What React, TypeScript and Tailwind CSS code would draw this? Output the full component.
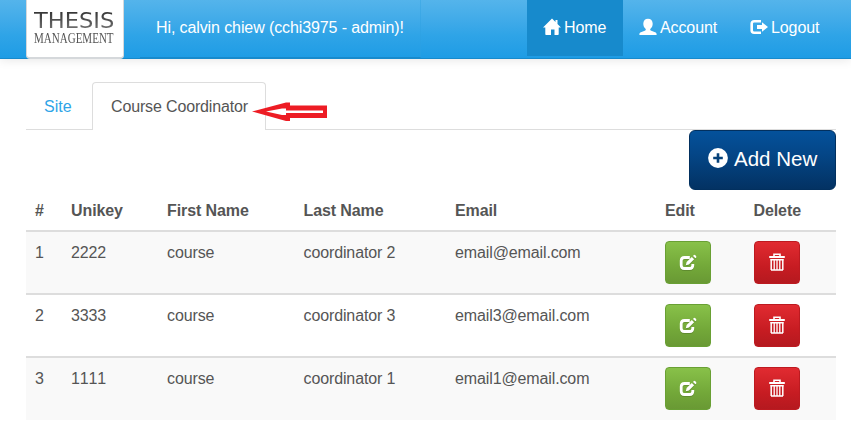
import React from "react";

const people = [
  { id: 1, unikey: "2222", first: "course", last: "coordinator 2", email: "email@email.com" },
  { id: 2, unikey: "3333", first: "course", last: "coordinator 3", email: "email3@email.com" },
  { id: 3, unikey: "1111", first: "course", last: "coordinator 1", email: "email1@email.com" },
];

const columns = "grid grid-cols-[36px_96px_136.5px_151.5px_210px_88.5px_91.5px]";

function HomeIcon() {
  return (
    <svg className="-mt-0.5 h-[18px] w-[18px] shrink-0" viewBox="0 0 18 18" fill="currentColor">
      <path d="M9 .5 18 9.600h-2.300v6.600c0 .5-.3.800-.8.800h-3.400v-5.400h-3.500V17H3.100c-.5 0-.8-.3-.8-.8V9.600H0zM12.500 2h2v4l-2-2z" />
    </svg>
  );
}

function UserIcon() {
  return (
    <svg className="-mt-0.5 h-[18px] w-[18px] shrink-0" viewBox="0 0 18 18" fill="currentColor">
      <path d="M9 .8c2.900 0 4.700 2 4.700 4.900 0 2.100-.9 3.900-2.200 5.100-.5.5-.4 1.300.2 1.600l4.400 1.900c.9.400 1.500.9 1.500 1.900v.8H.4v-.8c0-1 .6-1.500 1.500-1.900l4.400-1.900c.6-.3.7-1.100.2-1.600C5.200 9.600 4.300 7.800 4.300 5.700 4.300 2.800 6.100.8 9 .8z" />
    </svg>
  );
}

function LogoutIcon() {
  return (
    <svg className="-mt-0.5 h-[18px] w-[18px] shrink-0" viewBox="0 0 18 18" fill="none">
      <path d="M11 3.200H4.200c-1.500 0-2.500 1-2.500 2.500v6.600c0 1.500 1 2.500 2.500 2.500H11" stroke="currentColor" strokeWidth="2.600" />
      <path d="M12 4.300 18 9l-6 4.700V11H7V7h5z" fill="currentColor" />
    </svg>
  );
}

function PlusIcon() {
  return (
    <svg className="-mt-px h-5 w-5 shrink-0" viewBox="0 0 20 20">
      <circle cx="10" cy="10" r="9.900" fill="currentColor" />
      <path d="M10 5.200v9.600M5.200 10h9.600" stroke="#064179" strokeWidth="2.600" />
    </svg>
  );
}

function EditIcon() {
  return (
    <svg className="h-[18px] w-[18px] drop-shadow-[0_1px_0_rgba(0,0,0,0.15)]" viewBox="0 0 18 18" fill="none">
      <path d="M10.800 3.500H5.500Q2.200 3.500 2.200 6.800v4.400Q2.200 14.500 5.500 14.500h5Q13.800 14.500 13.800 11.200V10" stroke="currentColor" strokeWidth="2.800" />
      <path d="m6.800 11.300.8-3.200L12.800 2.900l2.300 2.300L9.900 10.400z" fill="currentColor" />
      <path d="m14 1.900.6-.6q.9-.9 1.800 0l.6.6q.9.900 0 1.800l-.6.600z" fill="currentColor" />
    </svg>
  );
}

function TrashIcon() {
  return (
    <svg className="mb-0.5 h-[18px] w-4" viewBox="0 0 16 18" fill="none" stroke="currentColor">
      <path d="M5 3V1.200h6V3" strokeWidth="1.600" />
      <path d="M.2 4h15.600" strokeWidth="2" />
      <path d="M1.500 6.700h13M2 17h12" strokeWidth="1.600" />
      <path d="M2.200 6v11M13.800 6v11" strokeWidth="1.500" />
      <path d="M5.200 6v11M8 6v11M10.800 6v11" strokeWidth="1.300" />
    </svg>
  );
}

function Logo() {
  return (
    <div className="h-[59px] w-[98px] rounded-b-[4px] border-x border-b-2 border-[#d5d8db] bg-white pt-[10px] pl-[7px] whitespace-nowrap">
      <div className="h-[21px] w-[82px]">
        <div className="w-max origin-top-left scale-x-[1.025] bg-linear-to-b from-[#303030] to-[#777777] bg-clip-text font-['DejaVu_Sans',sans-serif] text-[22px] leading-[21px] text-transparent">THESIS</div>
      </div>
      <div className="h-[15px] w-[82px]">
        <div className="w-max origin-top-left scale-x-[0.76] font-['Liberation_Serif',serif] text-[14.500px] leading-[14px] text-[#555555]">MANAGEMENT</div>
      </div>
    </div>
  );
}

function Navbar() {
  return (
    <header className="flex h-[59px] items-start border-b border-[#178acc] bg-linear-to-b from-[#54b4eb] via-[#2fa4e7] via-60% to-[#1d9ce5] pl-[26px] text-white shadow-[0_1px_10px_rgba(0,0,0,0.1)]">
      <Logo />
      <div className="ml-4 flex h-[58px] w-[281px] items-center border-r border-b border-r-[#2ca0e2]/40 border-b-[#178acc] pb-px pl-4 tracking-[-0.105px] whitespace-nowrap">
        Hi, calvin chiew (cchi3975 - admin)!
      </div>
      <nav className="ml-[106px] flex h-14 whitespace-nowrap">
        <a className="flex w-24 items-center gap-[3px] bg-[#178acc] pl-4">
          <HomeIcon />
          <span className="tracking-[-0.1px]">Home</span>
        </a>
        <a className="flex w-[111px] items-center gap-[3px] pl-4">
          <UserIcon />
          <span className="tracking-[-0.1px]">Account</span>
        </a>
        <a className="flex w-[102px] items-center gap-[3px] pl-4">
          <LogoutIcon />
          <span className="tracking-[-0.1px]">Logout</span>
        </a>
      </nav>
    </header>
  );
}

function Tabs() {
  return (
    <div className="relative mt-[23px] flex h-12 items-end border-b border-[#dddddd]">
      <a className="flex h-[47px] w-[66px] items-center pt-0.5 pl-[18px] text-[#2fa4e7]">Site</a>
      <a className="-mb-px flex h-12 w-[174px] items-center rounded-t-[4px] border border-b-0 border-[#dddddd] bg-white pl-[18px] tracking-[-0.15px] whitespace-nowrap">Course Coordinator</a>
      <svg className="absolute top-[19px] left-[225px] h-5 w-[78px]" viewBox="0 0 78 20">
        <path d="M1 10.500 35 1.500h4V4.500h37v12.500H39v3h-4z" fill="#ed1c24" />
        <path d="M15 10.500 31 7.500h4V9.500h37v2.500H35v2h-4z" fill="#fff" />
      </svg>
    </div>
  );
}

const actionButton = "flex h-[43px] w-[46px] items-center justify-center rounded-[4px] border text-white";

export default function App() {
  return (
    <div className="h-[422px] w-[851px] overflow-hidden bg-white font-['Liberation_Sans',Arial,sans-serif] text-[16px] leading-6 text-[#555555]">
      <Navbar />
      <main className="ml-[26px] w-[810px]">
        <Tabs />
        <div className="flex h-[60px] justify-end">
          <button className="flex h-[60px] w-[147px] items-center gap-[6px] rounded-[6px] border border-[#02305f] bg-linear-to-b from-[#04519b] via-[#044687] via-40% to-[#033263] pb-[3px] pl-[18px] text-[20.500px] whitespace-nowrap text-white">
            <PlusIcon />Add New
          </button>
        </div>
        <div className={`${columns} h-[42px] border-b-2 border-[#dddddd] pt-[9px] font-bold tracking-[-0.1px]`}>
          {["#", "Unikey", "First Name", "Last Name", "Email", "Edit", "Delete"].map((label) => (
            <div key={label} className="pl-[9px]">{label}</div>
          ))}
        </div>
        <div className="tracking-[-0.12px]">
          {people.map((person) => (
            <div key={person.id} className={`${columns} h-[63px] border-b-2 border-[#dddddd] pt-[9px] last:h-[62px] last:border-b-0 odd:bg-[#f9f9f9] even:bg-white`}>
              <div className="pl-[9px]">{person.id}</div>
              <div className="pl-[9px] [font-kerning:none]">{person.unikey}</div>
              <div className="pl-[9px]">{person.first}</div>
              <div className="pl-[9px]">{person.last}</div>
              <div className="pl-[9px]">{person.email}</div>
              <div className="pl-[9px]">
                <button className={`${actionButton} border-[#69a034] bg-linear-to-b from-[#88c149] via-[#73a839] via-60% to-[#699934]`}><EditIcon /></button>
              </div>
              <div className="pl-[9px]">
                <button className={`${actionButton} border-[#bd1a20] bg-linear-to-b from-[#e12b31] via-[#c71c22] via-60% to-[#b5191f]`}><TrashIcon /></button>
              </div>
            </div>
          ))}
        </div>
      </main>
    </div>
  );
}
